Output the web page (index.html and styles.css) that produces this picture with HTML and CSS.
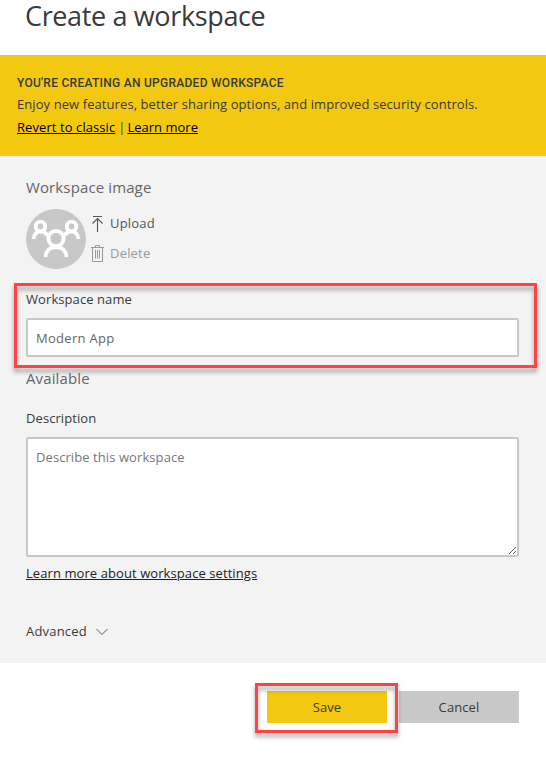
FILE: index.html
```html
<!DOCTYPE html>
<html lang="en">
<head>
<meta charset="utf-8">
<title>Create a workspace</title>
<link rel="stylesheet" href="styles.css">
</head>
<body>
<header class="header"><h1 class="title">Create a workspace</h1></header>
<section class="banner">
  <h2 class="banner-title"><span>YOU'RE CREATING AN UPGRADED WORKSPACE</span></h2>
  <p class="banner-text"><span class="enjoy">Enjoy new features, better sharing options, and improved security controls.</span></p>
  <p class="banner-links"><a class="revert" href="#">Revert to classic</a><span class="pipe">|</span><a class="learn" href="#">Learn more</a></p>
</section>
<main class="form">
  <h3 class="subhead image-head">Workspace image</h3>
  <div class="image-row">
    <svg class="avatar" viewBox="0 0 60 60" fill="none" stroke="#fff" stroke-width="3.800">
      <circle cx="30" cy="30" r="30" fill="#c8c8c8" stroke="none"/>
      <circle cx="14.500" cy="17.500" r="4.800"/>
      <circle cx="45.500" cy="17.500" r="4.800"/>
      <path d="M7.500 30c.5-5 3.500-7.500 7-7.500 3 0 5.500 1.500 7 4M52.500 30c-.5-5-3.500-7.500-7-7.500-3 0-5.500 1.500-7 4"/>
      <circle cx="30" cy="29.500" r="7.600"/>
      <path d="M19.500 48c.5-6.500 4.500-10 10.500-10s10 3.500 10.500 10"/>
    </svg>
    <div class="image-actions">
      <div class="action">
        <svg class="action-icon" viewBox="0 0 14 18" fill="none" stroke="#555" stroke-width="1.100"><path d="M2 2.500h9M6.500 18V4.500M1.500 9.500l5-5 5 5"/></svg>
        <span class="upload">Upload</span>
      </div>
      <div class="action disabled">
        <svg class="action-icon" viewBox="0 0 14 18" fill="none" stroke="#999"><path d="M0 3.500h13M4.500 3.500v-2h4v2M1.500 3.500v14h10v-14M4.500 6v8.500M6.500 6v8.500M8.500 6v8.500"/></svg>
        <span class="delete">Delete</span>
      </div>
    </div>
  </div>
  <div class="field name-field">
    <label class="label" for="name">Workspace name</label>
    <input class="input" id="name" value="Modern App">
    <div class="highlight highlight-name"></div>
  </div>
  <div class="subhead available">Available</div>
  <div class="field">
    <label class="label" for="desc">Description</label>
    <textarea class="input area" id="desc" placeholder="Describe this workspace"></textarea>
  </div>
  <p class="more"><a class="settings" href="#">Learn more about workspace settings</a></p>
  <div class="advanced"><span>Advanced</span>
    <svg class="chevron" viewBox="0 0 12 8" fill="none" stroke="#555"><path d="M.5 1L6 6.500 11.500 1"/></svg>
  </div>
</main>
<footer class="footer">
  <div class="save-wrap"><button class="button save">Save</button><div class="highlight highlight-save"></div></div>
  <button class="button cancel">Cancel</button>
</footer>
</body>
</html>
```
FILE: styles.css
```css
* { box-sizing: border-box; }
body, h1, h2, h3, p { margin: 0; font-weight: 400; }
body {
  width: 546px;
  height: 770px;
  overflow: hidden;
  background: #fff;
  color: #3a3a3a;
  font: 13px/20px "Open Sans", "Noto Sans", sans-serif;
  letter-spacing: .08px;
}
.header { height: 55px; padding-left: 25px; }
.title { font-size: 27px; line-height: 31px; letter-spacing: -.36px; white-space: nowrap; }
.banner { height: 101px; padding: 18px 17px 0; background: #f2c811; white-space: nowrap; }
.banner-title { font: 500 12px/20px Roboto, sans-serif; letter-spacing: .27px; }
.banner-text { margin-top: 1px; }
.banner-links { margin-top: 3px; letter-spacing: .08px; }
.banner a { color: #000; }
.learn { letter-spacing: 0; }
.pipe { margin: 0 2px 0 3px; }
.form { height: 507px; padding: 20px 27px 0 26px; background: #f3f3f3; }
.subhead { font-size: 15px; line-height: 22px; letter-spacing: .12px; color: #666; }
.image-row { display: flex; height: 60px; margin-top: 11px; }
.avatar { width: 60px; height: 60px; }
.image-actions { margin-left: 5px; padding-top: 4px; }
.action { display: flex; align-items: center; gap: 5px; height: 20px; margin-bottom: 10px; letter-spacing: .2px; color: #555; }
.action-icon { width: 14px; height: 18px; }
.disabled { color: #999; }
.field { position: relative; display: flex; flex-direction: column; }
.name-field { margin-top: 20px; }
.label { height: 20px; margin-bottom: 9px; }
.input {
  display: block;
  width: 493px;
  height: 39px;
  padding: 0 8px;
  border: 2px solid #c8c8c8;
  border-radius: 2px;
  outline: 0;
  background: #fff;
  color: #666;
  font: inherit;
  letter-spacing: .3px;
}
.area { height: 120px; padding-top: 8px; letter-spacing: .08px; }
.area::placeholder { color: #777; }
.available { margin-top: 10px; margin-bottom: 19px; }
.more { margin-top: 6px; }
.settings { color: #222; }
.advanced { display: flex; align-items: center; height: 20px; margin-top: 38px; letter-spacing: .2px; }
.chevron { width: 12px; height: 8px; margin: 2px 0 0 9px; }
.footer { display: flex; gap: 12px; padding: 28px 27px 0 267px; }
.save-wrap { position: relative; }
.button { display: block; width: 120px; height: 32px; padding: 0; border: 0; color: #3a3a3a; font: inherit; letter-spacing: .1px; }
.save { background: #f2c811; }
.cancel { background: #c8c8c8; }
.highlight {
  position: absolute;
  z-index: 1;
  border: 3px solid #ff4343;
  pointer-events: none;
  filter: drop-shadow(0 4px 2px rgba(0, 0, 0, .35));
}
.highlight-name { top: -6px; left: -12px; width: 523px; height: 85px; }
.highlight-save { top: -8px; left: -12px; width: 143px; height: 50px; }
```
